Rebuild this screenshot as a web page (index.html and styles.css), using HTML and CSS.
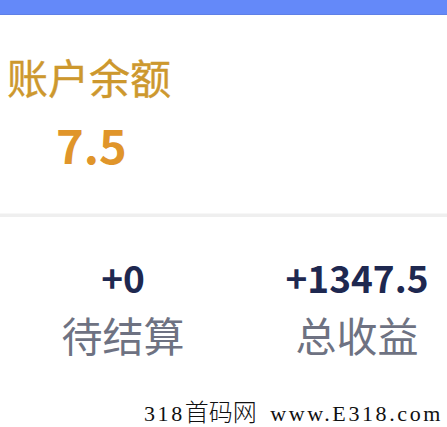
FILE: index.html
```html
<!DOCTYPE html>
<html>
<head>
<meta charset="utf-8">
<link rel="stylesheet" href="styles.css">
</head>
<body>
<div class="page">
  <div class="topbar"></div>
  <section class="balance">
    <div class="balance-title">账户余额</div>
    <div class="balance-amount">7.5</div>
  </section>
  <div class="divider"></div>
  <section class="stats">
    <div class="stat">
      <div class="stat-value">+0</div>
      <div class="stat-label">待结算</div>
    </div>
    <div class="stat">
      <div class="stat-value">+1347.5</div>
      <div class="stat-label">总收益</div>
    </div>
  </section>
  <div class="watermark"><span class="wm-latin">318</span><span class="wm-cjk">首码网</span> <span class="wm-latin wm-url">www.E318.com</span></div>
</div>
</body>
</html>
```
FILE: styles.css
```css
html, body {
  margin: 0;
  padding: 0;
  background: #ffffff;
}
.page {
  width: 447px;
  height: 427px;
  overflow: hidden;
  font-family: "Noto Sans CJK SC", "Noto Sans", sans-serif;
}
.topbar {
  height: 14px;
  background: #6489f9;
  border-bottom: 1px solid #5f80e6;
}
.balance {
  padding-left: 7px;
  padding-top: 36px;
}
.balance-title {
  font-size: 41px;
  line-height: 50px;
  color: #cd982e;
  -webkit-text-stroke: 0.4px #cd982e;
}
.balance-amount {
  padding-left: 49px;
  margin-top: 18px;
  font-size: 47px;
  font-weight: 700;
  line-height: 50px;
  color: #e0952a;
}
.divider {
  margin-top: 44px;
  height: 3px;
  border-top: 1px solid #f7f7f7;
  background: #efefef;
}
.stats {
  display: grid;
  grid-template-columns: 234px 234px;
  padding-left: 6px;
  padding-top: 38px;
}
.stat {
  display: flex;
  flex-direction: column;
  align-items: center;
}
.stat-value {
  font-size: 37px;
  font-weight: 700;
  line-height: 44px;
  color: #1e2850;
}
.stat-label {
  margin-top: 10px;
  font-size: 41px;
  line-height: 50px;
  color: #6e7282;
}
.watermark {
  margin-top: 38px;
  padding-left: 144px;
  white-space: nowrap;
  font-size: 24px;
  line-height: 28px;
  color: #111111;
}
.wm-latin {
  font-family: "Liberation Serif", serif;
  font-size: 22px;
  letter-spacing: 2.6px;
}
.wm-url {
  margin-left: 8px;
}
.wm-cjk {
  font-family: "Noto Sans CJK SC", sans-serif;
  font-weight: 300;
  font-size: 24px;
}
```
